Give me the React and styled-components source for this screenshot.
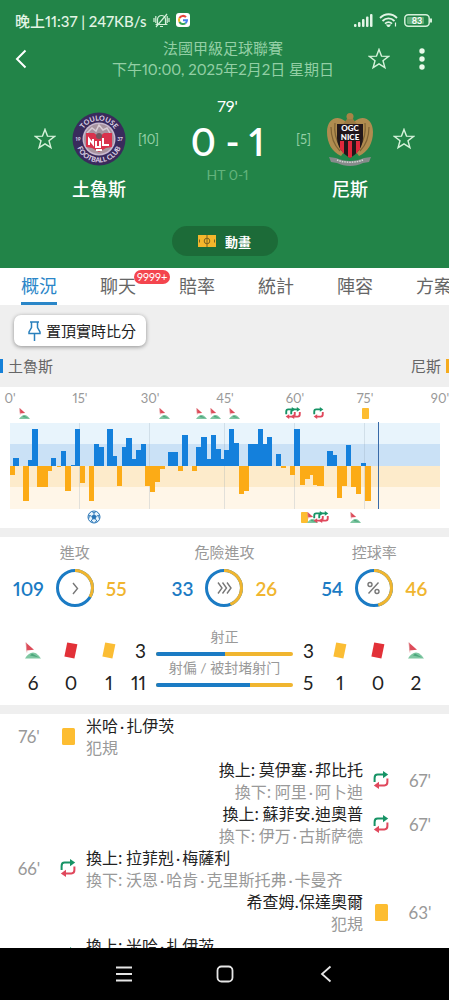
import { Fragment, useState } from "react";
import styled, { createGlobalStyle } from "styled-components";

const GlobalStyle = createGlobalStyle`
  * {
    box-sizing: border-box;
  }

  body {
    margin: 0;
    background: #ffffff;
    font-family: Lato, "Noto Sans CJK TC", sans-serif;
    font-variant-numeric: proportional-nums;
    color: #222222;
  }

  button {
    margin: 0;
    padding: 0;
    border: none;
    background: none;
    font: inherit;
    font-variant-numeric: inherit;
    color: inherit;
    cursor: pointer;
  }

  svg {
    display: block;
  }
`;

const BLUE = "#1b7bc4";
const ORANGE = "#f0b52f";

const Screen = styled.div`
  height: 100vh;
  display: flex;
  flex-direction: column;
  overflow: hidden;

  > * {
    flex-shrink: 0;
  }
`;

/* header */

const Header = styled.header`
  background: #228448;
  color: #ffffff;
  padding-bottom: 12px;
`;

const StatusBar = styled.div`
  height: 38px;
  padding: 2px 16px 0 15px;
  display: flex;
  align-items: center;
  justify-content: space-between;
  font-size: 15px;
  font-weight: 500;
  color: #e3f5e6;
`;

const StatusGroup = styled.div`
  display: flex;
  align-items: center;
  gap: 6px;
`;

const TitleBar = styled.div`
  display: grid;
  grid-template-columns: 1fr auto 1fr;
  align-items: center;
  padding: 0 16px 0 13px;
`;

const Title = styled.h1`
  margin: 0;
  font-size: 15px;
  font-weight: 400;
  line-height: 21px;
  text-align: center;
  color: #93cfa5;

  span {
    display: block;
  }
`;

const TitleActions = styled.div`
  display: flex;
  justify-content: flex-end;
  gap: 21px;
`;

const IconButton = styled.button`
  display: flex;
  align-items: center;
  justify-content: ${(props) => props.$align || "center"};
  min-width: 22px;
  height: 24px;
`;

const Match = styled.div`
  display: flex;
  align-items: flex-start;
  padding: 16px 34px 0;
`;

const Side = styled.div`
  display: flex;
  flex-direction: ${(props) => (props.$away ? "row-reverse" : "row")};
  padding-top: 16px;
`;

const SideCell = styled.div`
  height: 54px;
  display: flex;
  align-items: center;
`;

const Team = styled.div`
  width: 54px;
  margin: ${(props) => (props.$away ? "0 16px 0 12px" : "0 12px 0 16px")};
  text-align: center;
  white-space: nowrap;
  font-size: 18px;
  font-weight: 500;
  line-height: 26px;

  svg {
    margin-bottom: 10px;
  }
`;

const Rank = styled(SideCell)`
  font-size: 13px;
  color: #93cfa5;
`;

const Center = styled.div`
  flex: 1;
  text-align: center;
`;

const Clock = styled.div`
  font-size: 16px;
  line-height: 20px;
`;

const Score = styled.div`
  font-size: 38px;
  font-weight: 600;
  line-height: 50px;
  white-space: nowrap;
`;

const HalfTime = styled.div`
  font-size: 14px;
  line-height: 18px;
  color: #62b37c;
`;

const AnimationButton = styled.button`
  display: flex;
  align-items: center;
  justify-content: center;
  gap: 9px;
  width: 106px;
  height: 30px;
  margin: 24px auto 0;
  border-radius: 15px;
  background: #1c6b38;
  font-size: 13px;
  font-weight: 700;
`;

/* tabs */

const Tabs = styled.nav`
  display: flex;
  gap: 43px;
  height: 37px;
  padding: 0 21px;
  overflow: hidden;
  background: #ffffff;
`;

const Tab = styled.button`
  position: relative;
  flex-shrink: 0;
  height: 37px;
  border-bottom: 3px solid ${(props) => (props.$active ? "#2a86c8" : "transparent")};
  font-size: 18px;
  color: ${(props) => (props.$active ? "#2a86c8" : "#666666")};
`;

const Badge = styled.span`
  position: absolute;
  left: 34px;
  top: 2px;
  height: 14px;
  padding: 0 3px;
  border-radius: 7px;
  background: #f4454e;
  color: #ffffff;
  font-size: 11px;
  line-height: 14px;
`;

const Overview = styled.section`
  padding: 10px 0;
  background: #efefef;
`;

const PinButton = styled.button`
  display: flex;
  align-items: center;
  gap: 5px;
  height: 31px;
  margin: 0 14px 9px;
  padding: 0 10px 0 14px;
  border-radius: 7px;
  background: #ffffff;
  box-shadow: 0 1px 4px rgba(0, 0, 0, 0.4);
  font-size: 15px;
`;

const Legend = styled.div`
  display: flex;
  justify-content: space-between;
  font-size: 15px;
  line-height: 22px;
  color: #666666;
`;

const LegendItem = styled.div`
  display: flex;
  flex-direction: ${(props) => (props.$away ? "row-reverse" : "row")};
  align-items: center;
  gap: 5px;

  &::before {
    content: "";
    width: 3px;
    height: 14px;
    background: ${(props) => (props.$away ? "#f5ab1d" : "#1480d8")};
  }
`;

const Chart = styled.svg`
  width: 100%;
  height: auto;
  font-size: 13px;
  fill: #999999;
`;

const Gap = styled.div`
  height: 9px;
  background: #efefef;
`;

/* stats */

const Rings = styled.div`
  display: grid;
  grid-template-columns: repeat(3, 1fr);
  padding-top: 4px;
`;

const RingStat = styled.div`
  text-align: center;
`;

const StatLabel = styled.div`
  font-size: 15px;
  line-height: 22px;
  color: #999999;
`;

const RingRow = styled.div`
  display: grid;
  grid-template-columns: 1fr 38px 1fr;
  gap: 12px;
  align-items: center;
  margin-top: 6px;
  font-size: 19px;
  font-weight: 600;
`;

const RingValue = styled.span`
  text-align: ${(props) => (props.$away ? "left" : "right")};
  color: ${(props) => (props.$away ? ORANGE : BLUE)};
`;

const Shots = styled.div`
  display: flex;
  align-items: flex-start;
  padding: 20px 14px 7px;
`;

const Tally = styled.div`
  display: flex;
  flex-direction: ${(props) => (props.$away ? "row-reverse" : "row")};
  padding-top: 7px;
  font-size: 19px;
`;

const TallyColumn = styled.div`
  width: 38px;

  > * {
    height: 32px;
    display: flex;
    align-items: center;
    justify-content: center;
  }
`;

const ShotCount = styled(TallyColumn)`
  width: 18px;

  > * {
    justify-content: ${(props) => (props.$away ? "flex-start" : "flex-end")};
  }
`;

const ShotBars = styled.div`
  flex: 1;
  margin: 0 10px;
  text-align: center;
  font-size: 14px;
  line-height: 20px;
  color: #999999;
  white-space: nowrap;
`;

const ShotBar = styled.div`
  height: 4px;
  margin: 5px 0 2px;
  border-radius: 2px;
  overflow: hidden;
  background: ${ORANGE};

  > div {
    height: 4px;
    background: ${BLUE};
  }
`;

/* timeline */

const Timeline = styled.ul`
  flex: 1 1 0;
  min-height: 0;
  margin: 0;
  padding: 0;
  list-style: none;
  overflow: hidden;
`;

const Event = styled.li`
  display: flex;
  flex-direction: ${(props) => (props.$away ? "row-reverse" : "row")};
  align-items: center;
  min-height: 44px;
  padding: 0 8px;
  text-align: ${(props) => (props.$away ? "right" : "left")};
`;

const Minute = styled.div`
  width: 42px;
  text-align: center;
  font-size: 17px;
  color: #999999;
`;

const EventIcon = styled.div`
  width: 36px;
  display: flex;
  justify-content: center;
`;

const EventText = styled.div`
  flex: 1;
  align-self: flex-start;
  font-family: "Noto Sans CJK TC", sans-serif;
  font-size: 16px;
  line-height: 22px;

  p {
    margin: 0;
  }

  p + p {
    color: #999999;
  }
`;

/* the CJK face draws this dot full width */
const NameDot = styled.span`
  margin: 0 2px;
  font-family: Lato, sans-serif;
  line-height: 1;
`;

const BottomNav = styled.nav`
  display: flex;
  justify-content: center;
  gap: 79px;
  padding: 14px 0;
  background: #000000;
`;

const StarIcon = () => (
  <svg width="22" height="22" viewBox="0 0 22 22" fill="none" stroke="#d5f2da" strokeWidth="1.4">
    <path d="M11 1.4l2.5 6.7 7.1.3-5.6 4.4 1.9 6.9-5.9-3.9-5.9 3.9L7 12.8 1.4 8.4l7.1-.3z" />
  </svg>
);

const FlagIcon = (props) => (
  <svg viewBox="0 0 16 16" {...props}>
    <path d="M.8 0L9 7.2 1.4 8z" fill="#dd4c5a" />
    <path d="M0 16c2-3.6 5-6 8-6 3.2 0 5.8 3 8 6z" fill="#7fc7a2" />
    <path d="M7 11l7 4-9-2z" fill="#4ca67c" />
    <path d="M1 0l.9 10" stroke="#e2a3a6" strokeWidth=".7" />
  </svg>
);

const CardIcon = ({ color = "#fdbd31", ...props }) => (
  <svg viewBox="0 0 13 17" {...props}>
    <rect width="13" height="17" rx="1.5" fill={color} />
  </svg>
);

const TiltedCard = ({ color }) => (
  <svg width="14" height="17" viewBox="0 0 14 17">
    <path d="M3.2.4L13.4 2.2 10.4 16.4.4 14.6z" fill={color} />
  </svg>
);

const SubIcon = (props) => (
  <svg viewBox="0 0 16 18" fill="none" strokeWidth="2" {...props}>
    <path d="M1.6 11V7c0-2.200 1-3.400 3-3.400H11" stroke="#169365" />
    <path d="M10 0l5.200 3.600L10 7.200z" fill="#169365" />
    <path d="M14.400 7.500V11c0 2.200-1 3.400-3 3.400H5" stroke="#e0485c" />
    <path d="M6 10.800L.8 14.400 6 18z" fill="#e0485c" />
  </svg>
);

const BallIcon = (props) => (
  <svg viewBox="0 0 14 14" fill="none" stroke="#2673b5" strokeWidth="1" {...props}>
    <circle cx="7" cy="7" r="6" fill="#e9f4fc" />
    <path d="M7 4.8l2.100 1.500-.8 2.500H5.700l-.8-2.500z" fill="#2673b5" />
    <path d="M7 4.4V2.500M9.500 6.200l2-.8M8.500 9.100l1.400 2M5.500 9.100l-1.400 2M4.500 6.200l-2-.8" />
    <path d="M4.800 1.600L7 2.800l2.200-1.200M12.600 5l-1.200.5.800 3M1.400 5l1.200.5-.8 3M3.600 11.600l.6-.6 2 1M10.400 11.600l-.6-.6-2 1" strokeWidth=".8" />
  </svg>
);

const ToulouseCrest = () => (
  <svg width="54" height="54" viewBox="0 0 54 54">
    <defs>
      <path id="crestTop" d="M8.500 27a18.500 18.500 0 0 1 37 0" />
      <path id="crestBottom" d="M3.500 27a23.500 23.500 0 0 0 47 0" />
      <clipPath id="crestInner">
        <circle cx="27" cy="27" r="15" />
      </clipPath>
    </defs>
    <circle cx="27" cy="27" r="26.500" fill="#392b5c" />
    <circle cx="27" cy="27" r="16.500" fill="#c9b9cf" />
    <g clipPath="url(#crestInner)">
      <rect x="10" y="11" width="34" height="32" fill="#a7949f" />
      <path d="M15 21l5-5 4 3 3-6 4 5 4-2 4 7" fill="none" stroke="#d8cdd6" strokeWidth="1.500" />
      <path d="M14 21h8l5 4 5-4h8v14l-6 1-7 4-7-4-6-1z" fill="#d9324c" />
      <path d="M17 33v-6l4 5v-5M24 29v6h4v-6M31 26v7h6M24 38h6" fill="none" stroke="#ffffff" strokeWidth="2" />
      <circle cx="27" cy="24" r="3" fill="#71565f" />
    </g>
    <g fill="#e0d8ea" fontSize="7" fontWeight="700" textAnchor="middle">
      <text>
        <textPath href="#crestTop" startOffset="50%">TOULOUSE</textPath>
      </text>
      <text>
        <textPath href="#crestBottom" startOffset="50%">FOOTBALL CLUB</textPath>
      </text>
      <text x="6" y="29" fontSize="5">19</text>
      <text x="48" y="29" fontSize="5">37</text>
    </g>
  </svg>
);

const NiceCrest = () => (
  <svg width="54" height="54" viewBox="0 0 54 54">
    <path d="M22 9C13 2 4 8 4 20c0 11 5 20 14 24l6-8zM32 9c9-7 18-1 18 11 0 11-5 20-14 24l-6-8z" fill="#b08c50" />
    <path d="M8 15c0 10 3 18 9 24M12 11c-1 9 1 17 5 23M46 15c0 10-3 18-9 24M42 11c1 9-1 17-5 23" fill="none" stroke="#7f6234" strokeWidth="1.200" />
    <circle cx="27" cy="4.500" r="3.500" fill="#a98346" />
    <path d="M20 12l4-5h6l4 5z" fill="#9b7a43" />
    <path d="M14 12h26v14c0 9-6 16-13 20-7-4-13-11-13-20z" fill="#22171a" />
    <path d="M17 29h4v13l-4-5zM25 29h4v16l-2 1-2-1zM33 29h4v8l-4 5z" fill="#e0283c" />
    <text fill="#ffffff" fontSize="8" fontWeight="900" textAnchor="middle">
      <tspan x="27" y="19">OGC</tspan>
      <tspan x="27" y="28">NICE</tspan>
    </text>
    <path d="M6 45l7 1c9 4 19 4 28 0l7-1-2 5-6 1c-8 4-18 4-26 0l-6-1z" fill="#868b8b" />
    <path d="M14 48c8 3 18 3 26 0" fill="none" stroke="#d4d8d5" strokeWidth="1.500" strokeDasharray="1.500 1" />
  </svg>
);

const tabs = [
  { name: "概況" },
  { name: "聊天", badge: "9999+" },
  { name: "賠率" },
  { name: "統計" },
  { name: "陣容" },
  { name: "方案" },
];

const ticks = [
  [10, "0'"],
  [80, "15'"],
  [150, "30'"],
  [225, "45'"],
  [295, "60'"],
  [365, "75'"],
  [440, "90'"],
];

// [start, end, height], three units to a chart pixel
const homePressure = [
  [40, 58, 23], [85, 97, 19], [97, 115, 110], [153, 169, 25], [183, 199, 44],
  [212, 224, 4], [224, 241, 110], [281, 297, 66], [297, 311, 56], [322, 338, 110],
  [338, 352, 30], [366, 378, 56], [378, 395, 84], [395, 408, 20], [408, 422, 47],
  [422, 438, 66], [505, 534, 41], [547, 564, 93], [589, 604, 56], [604, 621, 87],
  [621, 632, 20], [632, 647, 93], [647, 663, 50], [663, 673, 20], [673, 688, 47],
  [688, 703, 110], [703, 718, 69], [744, 773, 66], [773, 789, 110], [789, 800, 66],
  [800, 816, 87], [827, 844, 37], [883, 900, 110], [982, 998, 44], [998, 1012, 33],
  [1039, 1054, 63], [1083, 1097, 10],
];

const awayPressure = [
  [30, 44, 28], [70, 86, 104], [112, 144, 62], [144, 155, 16], [170, 183, 4],
  [196, 212, 74], [240, 255, 52], [266, 282, 104], [351, 367, 60], [435, 449, 60],
  [449, 465, 78], [465, 480, 48], [480, 494, 8], [534, 550, 16], [575, 591, 16],
  [716, 732, 84], [732, 746, 75], [844, 859, 5], [869, 886, 28], [900, 916, 56],
  [916, 929, 38], [929, 939, 28], [939, 950, 56], [950, 972, 59], [1010, 1027, 95],
  [1027, 1042, 59], [1054, 1067, 62], [1067, 1083, 84], [1095, 1112, 104],
];

const homeMarks = [
  ["flag", 24], ["flag", 164], ["flag", 201], ["flag", 215], ["flag", 234],
  ["sub", 290], ["sub", 295], ["sub", 318], ["card", 365],
];

const awayMarks = [
  ["ball", 94], ["card", 304], ["flag", 312], ["sub", 318], ["sub", 323], ["flag", 355],
];

const rings = [
  { label: "進攻", home: 109, away: 55, icon: "single" },
  { label: "危險進攻", home: 33, away: 26, icon: "triple" },
  { label: "控球率", home: 54, away: 46, icon: "percent" },
];

const shots = [
  { label: "射正", home: 3, away: 3 },
  { label: "射偏 / 被封堵射门", home: 11, away: 5 },
];

const events = [
  { minute: "76'", type: "card", lines: ["米哈·扎伊茨", "犯規"] },
  { minute: "67'", type: "sub", away: true, lines: ["換上: 莫伊塞·邦比托", "換下: 阿里·阿卜迪"] },
  { minute: "67'", type: "sub", away: true, lines: ["換上: 蘇菲安.迪奧普", "換下: 伊万·古斯萨德"] },
  { minute: "66'", type: "sub", lines: ["換上: 拉菲剋·梅薩利", "換下: 沃恩·哈肯·克里斯托弗·卡曼齐"] },
  { minute: "63'", type: "card", away: true, lines: ["希查姆.保達奧爾", "犯規"] },
  { minute: "59'", type: "sub", lines: ["換上: 米哈·扎伊茨"] },
];

const Mark = ({ type, x, y }) => {
  if (type === "flag") return <FlagIcon x={x - 5} y={y - 5} width="11" height="11" />;
  if (type === "card") return <CardIcon x={x - 3} y={y - 5} width="7" height="11" preserveAspectRatio="none" />;
  if (type === "ball") return <BallIcon x={x - 7} y={y - 7} width="14" height="14" />;
  return <SubIcon x={x - 5} y={y - 6} width="11" height="12" strokeWidth="2.800" />;
};

const PressureChart = () => (
  <Chart viewBox="0 0 449 141">
    {ticks.map(([x, label]) => (
      <text key={label} x={x} y="16" textAnchor="middle">
        {label}
      </text>
    ))}
    <rect x="10" y="36" width="430" height="21" fill="#e8f4fc" />
    <rect x="10" y="57" width="430" height="22" fill="#cae1f6" />
    <rect x="10" y="79" width="430" height="21" fill="#fdebcb" />
    <rect x="10" y="100" width="430" height="22" fill="#fff6e8" />
    {ticks.slice(1, -1).map(([x]) => (
      <rect key={x} x={x - 1} y="36" width="1" height="86" fill="#8aa0b0" opacity="0.25" />
    ))}
    <g transform="translate(0 79) scale(0.33333)">
      {homePressure.map(([from, to, height]) => (
        <rect key={from} x={from} y={-height} width={to - from} height={height} fill="#1480dc" shapeRendering="crispEdges" />
      ))}
      {awayPressure.map(([from, to, height]) => (
        <rect key={from} x={from} y="0" width={to - from} height={height} fill="#fcab16" shapeRendering="crispEdges" />
      ))}
    </g>
    <rect x="378" y="35" width="1" height="87" fill="#386aa8" />
    {homeMarks.map(([type, x]) => (
      <Mark key={x} type={type} x={x} y={26} />
    ))}
    {awayMarks.map(([type, x]) => (
      <Mark key={x} type={type} x={x} y={130} />
    ))}
  </Chart>
);

const Ring = ({ home, away, icon }) => {
  const share = (away / (home + away)) * 100;
  return (
    <svg width="38" height="38" viewBox="0 0 38 38" fill="none">
      <circle cx="19" cy="19" r="17.500" stroke={BLUE} strokeWidth="3" />
      <circle
        cx="19"
        cy="19"
        r="17.500"
        stroke={ORANGE}
        strokeWidth="3"
        pathLength="100"
        strokeDasharray={`${share} 100`}
        transform="rotate(-90 19 19)"
      />
      <g stroke="#777777" strokeWidth="1.400">
        {icon === "single" && <path d="M17 14l4.500 5.500L17 25" />}
        {icon === "triple" && <path d="M13 13.500l4 5.500-4 5.500M17.500 13.500l4 5.500-4 5.500M22 13.500l4 5.500-4 5.500" />}
        {icon === "percent" && (
          <>
            <path d="M23.500 13.500l-10 11" />
            <circle cx="15" cy="15.500" r="2" />
            <circle cx="22" cy="22.500" r="2" />
          </>
        )}
      </g>
    </svg>
  );
};

const TeamTally = ({ away, corners, reds, yellows, counts }) => (
  <Tally $away={away}>
    <TallyColumn>
      <div>
        <FlagIcon width="16" height="17" />
      </div>
      <div>{corners}</div>
    </TallyColumn>
    <TallyColumn>
      <div>
        <TiltedCard color="#e23138" />
      </div>
      <div>{reds}</div>
    </TallyColumn>
    <TallyColumn>
      <div>
        <TiltedCard color="#fbbd34" />
      </div>
      <div>{yellows}</div>
    </TallyColumn>
    <ShotCount $away={away}>
      {counts.map((count, index) => (
        <div key={index}>{count}</div>
      ))}
    </ShotCount>
  </Tally>
);

const EventLine = ({ text }) => (
  <p>
    {text.split("·").map((part, index) => (
      <Fragment key={index}>
        {index > 0 && <NameDot>·</NameDot>}
        {part}
      </Fragment>
    ))}
  </p>
);

const App = () => {
  const [activeTab, setActiveTab] = useState("概況");

  return (
    <Screen>
      <GlobalStyle />
      <Header>
        <StatusBar>
          <StatusGroup>
            <span>晚上11:37 | 247KB/s</span>
            <svg width="17" height="15" viewBox="0 0 17 15" fill="none" stroke="#d5f0da" strokeWidth="1.200">
              <path d="M4.500 10.500V6.500a4 4 0 0 1 8 0v4l1 1h-10zM7 13.500h3M1 5v4M16 5v4M2.800 3v7M14.200 3v7M3 14L14 1" />
            </svg>
            <svg width="14" height="14" viewBox="0 0 14 14">
              <rect width="14" height="14" rx="3" fill="#ffffff" />
              <g fill="none" strokeWidth="2">
                <path d="M10 4.200A4 4 0 0 0 3.500 5" stroke="#e8453c" />
                <path d="M3.500 5a4 4 0 0 0 0 4" stroke="#f4b92c" />
                <path d="M3.500 9a4 4 0 0 0 6 1.200" stroke="#36a55a" />
                <path d="M9.500 10.200A4 4 0 0 0 11 7.200H7" stroke="#4580ec" />
              </g>
            </svg>
          </StatusGroup>
          <StatusGroup>
            <svg width="19" height="13" viewBox="0 0 19 13" fill="#e3f5e6">
              <rect x="0" y="10" width="2.500" height="3" rx="1" />
              <rect x="4" y="8" width="2.500" height="5" rx="1" />
              <rect x="8" y="5" width="2.500" height="8" rx="1" />
              <rect x="12" y="2.500" width="2.500" height="10.500" rx="1" />
              <rect x="16" y="0" width="2.500" height="13" rx="1" />
            </svg>
            <svg width="19" height="14" viewBox="0 0 19 14" fill="none" stroke="#e3f5e6" strokeWidth="1.800">
              <path d="M1 5c5-5 12-5 17 0M3.500 8c3.600-3.600 8.400-3.600 12 0M6 10.700c2.200-2 4.800-2 7 0" />
              <path d="M8 12h3l-1.500 2zM16.500 9.500v4" fill="#e3f5e6" strokeWidth="1.200" />
            </svg>
            <svg width="29" height="13" viewBox="0 0 29 13">
              <rect x=".8" y=".8" width="24.400" height="11.400" rx="3.500" fill="none" stroke="#d5f0da" strokeWidth="1.500" />
              <rect x="3" y="3" width="17" height="7" rx="1" fill="#5fae78" />
              <path d="M27 4.500v4" stroke="#d5f0da" strokeWidth="2" />
              <text x="13" y="10" fontSize="9" fontWeight="700" textAnchor="middle" fill="#ffffff">
                83
              </text>
            </svg>
          </StatusGroup>
        </StatusBar>
        <TitleBar>
          <IconButton $align="flex-start" aria-label="返回">
            <svg width="14" height="20" viewBox="0 0 14 20" fill="none" stroke="#ffffff" strokeWidth="2">
              <path d="M12.500 1.500L4 10l8.500 8.500" />
            </svg>
          </IconButton>
          <Title>
            <span>法國甲級足球聯賽</span>
            <span>下午10:00, 2025年2月2日 星期日</span>
          </Title>
          <TitleActions>
            <IconButton aria-label="收藏">
              <StarIcon />
            </IconButton>
            <IconButton aria-label="更多">
              <svg width="6" height="22" viewBox="0 0 6 22" fill="#e8faea">
                <circle cx="3" cy="3" r="2.700" />
                <circle cx="3" cy="11" r="2.700" />
                <circle cx="3" cy="19" r="2.700" />
              </svg>
            </IconButton>
          </TitleActions>
        </TitleBar>
        <Match>
          <Side>
            <SideCell>
              <IconButton aria-label="收藏土魯斯">
                <StarIcon />
              </IconButton>
            </SideCell>
            <Team>
              <ToulouseCrest />
              土魯斯
            </Team>
            <Rank>[10]</Rank>
          </Side>
          <Center>
            <Clock>79'</Clock>
            <Score>0 - 1</Score>
            <HalfTime>HT 0-1</HalfTime>
          </Center>
          <Side $away>
            <SideCell>
              <IconButton aria-label="收藏尼斯">
                <StarIcon />
              </IconButton>
            </SideCell>
            <Team $away>
              <NiceCrest />
              尼斯
            </Team>
            <Rank>[5]</Rank>
          </Side>
        </Match>
        <AnimationButton>
          <svg width="18" height="12" viewBox="0 0 18 12" fill="none" stroke="#7b6220" strokeWidth="1">
            <rect width="18" height="12" fill="#f4b62c" stroke="none" />
            <path d="M9 0v12M1.500 4.500v3M16.500 4.500v3" />
            <circle cx="9" cy="6" r="2.800" />
          </svg>
          動畫
        </AnimationButton>
      </Header>

      <Tabs>
        {tabs.map(({ name, badge }) => (
          <Tab key={name} $active={activeTab === name} onClick={() => setActiveTab(name)}>
            {name}
            {badge && <Badge>{badge}</Badge>}
          </Tab>
        ))}
      </Tabs>

      <Overview>
        <PinButton>
          <svg width="13" height="20" viewBox="0 0 13 20" fill="none" stroke="#2a80bd" strokeWidth="1.500">
            <path d="M2 1h9M3.500 1v5.500L1 11v1.500h11V11L9.500 6.500V1M6.500 12.500V20" />
          </svg>
          置頂實時比分
        </PinButton>
        <Legend>
          <LegendItem>土魯斯</LegendItem>
          <LegendItem $away>尼斯</LegendItem>
        </Legend>
      </Overview>

      <PressureChart />
      <Gap />

      <section>
        <Rings>
          {rings.map((ring) => (
            <RingStat key={ring.label}>
              <StatLabel>{ring.label}</StatLabel>
              <RingRow>
                <RingValue>{ring.home}</RingValue>
                <Ring home={ring.home} away={ring.away} icon={ring.icon} />
                <RingValue $away>{ring.away}</RingValue>
              </RingRow>
            </RingStat>
          ))}
        </Rings>
        <Shots>
          <TeamTally corners={6} reds={0} yellows={1} counts={shots.map((shot) => shot.home)} />
          <ShotBars>
            {shots.map(({ label, home, away }) => (
              <div key={label}>
                {label}
                <ShotBar>
                  <div style={{ width: `${(home / (home + away)) * 100}%` }} />
                </ShotBar>
              </div>
            ))}
          </ShotBars>
          <TeamTally away corners={2} reds={0} yellows={1} counts={shots.map((shot) => shot.away)} />
        </Shots>
      </section>
      <Gap />

      <Timeline>
        {events.map(({ minute, type, away, lines }, index) => (
          <Event key={index} $away={away}>
            <Minute>{minute}</Minute>
            <EventIcon>
              {type === "card" ? <CardIcon width="13" height="17" /> : <SubIcon width="16" height="18" />}
            </EventIcon>
            <EventText>
              {lines.map((line) => (
                <EventLine key={line} text={line} />
              ))}
            </EventText>
          </Event>
        ))}
      </Timeline>

      <BottomNav>
        <IconButton aria-label="選單">
          <svg width="16" height="16" viewBox="0 0 16 16" stroke="#e6e6e6" strokeWidth="1.800">
            <path d="M0 1.500h16M0 8h16M0 14.500h16" />
          </svg>
        </IconButton>
        <IconButton aria-label="主畫面">
          <svg width="18" height="18" viewBox="0 0 18 18" fill="none" stroke="#e6e6e6" strokeWidth="1.800">
            <rect x="1.500" y="1.500" width="15" height="15" rx="4" />
          </svg>
        </IconButton>
        <IconButton aria-label="返回">
          <svg width="12" height="18" viewBox="0 0 12 18" fill="none" stroke="#e6e6e6" strokeWidth="1.800">
            <path d="M10.500 1.500L2 9l8.500 7.500" />
          </svg>
        </IconButton>
      </BottomNav>
    </Screen>
  );
};

export default App;
